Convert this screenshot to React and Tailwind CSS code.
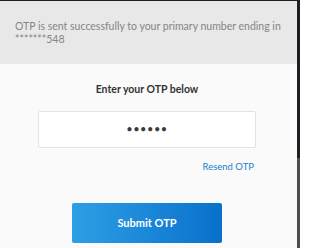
export default function App() {
  return (
    <div className="w-[300px] h-[248px] overflow-hidden flex bg-[#1b1f25]" style={{ fontFamily: 'Lato, "Liberation Sans", sans-serif' }}>
      <div className="w-[297px] mt-px flex flex-col">
        {/* Header message */}
        <div className="h-[63px] bg-[#e8e8e8] px-[15px] pt-[19px] text-[10.5px] leading-[13px] text-[#858585]">
          <p className="whitespace-nowrap">OTP is sent successfully to your primary number ending in</p>
          <p>*******548</p>
        </div>

        {/* Body */}
        <div className="flex-1 bg-[#fafafa] flex flex-col items-center pr-[3px]">
          <h2 className="mt-[18px] text-[10.5px] font-bold text-[#333]">Enter your OTP below</h2>
          <div className="mt-[13px] w-[218px] h-[37px] bg-white border border-[#e3e3e3] rounded-[2px] flex items-center justify-center">
            <span className="text-[#3a3a3a] text-[11px] tracking-[0.5px]">••••••</span>
          </div>
          <div className="w-[218px] flex justify-end mt-[12px]">
            <a className="text-[9.5px] text-[#1b7fcc] pr-[2px]">Resend OTP</a>
          </div>
          <button className="mt-[29px] w-[150px] h-[40px] rounded-[2px] bg-gradient-to-r from-[#2d9fe5] to-[#0870cc] text-white text-[11px] font-bold">
            Submit OTP
          </button>
        </div>
      </div>
      <div className="w-[3px] flex flex-col">
        <div className="h-[158px] bg-[#1b1f25]" />
        <div className="flex-1 bg-[#4d4d4d]" />
      </div>
    </div>
  );
}
